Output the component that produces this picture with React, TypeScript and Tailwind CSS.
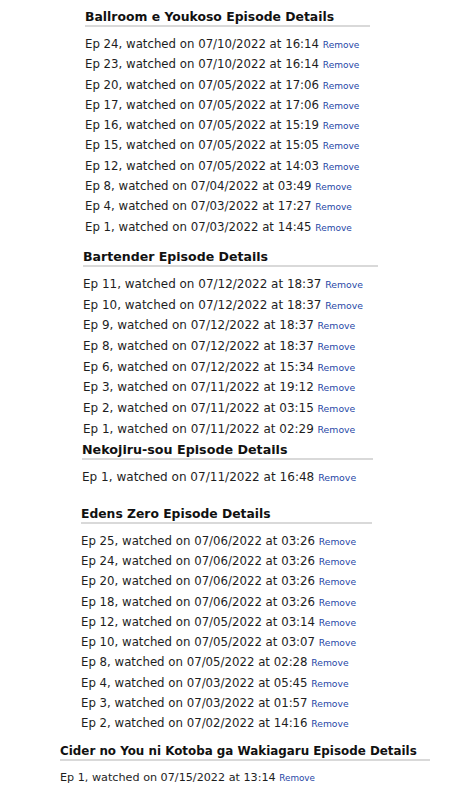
import React from 'react';

type Section = {
  title: string;
  wrap: string;
  pad: string;
  head: string;
  item: string;
  remove: string;
  entries: string[];
};

const sections: Section[] = [
  {
    title: 'Ballroom e Youkoso',
    wrap: 'mt-[9px] ml-[85px]',
    pad: 'pr-[11px]',
    head: 'text-[12.4px]',
    item: 'text-[11.75px] leading-[20.3px]',
    remove: 'text-[9px]',
    entries: [
      'Ep 24, watched on 07/10/2022 at 16:14',
      'Ep 23, watched on 07/10/2022 at 16:14',
      'Ep 20, watched on 07/05/2022 at 17:06',
      'Ep 17, watched on 07/05/2022 at 17:06',
      'Ep 16, watched on 07/05/2022 at 15:19',
      'Ep 15, watched on 07/05/2022 at 15:05',
      'Ep 12, watched on 07/05/2022 at 14:03',
      'Ep 8, watched on 07/04/2022 at 03:49',
      'Ep 4, watched on 07/03/2022 at 17:27',
      'Ep 1, watched on 07/03/2022 at 14:45',
    ],
  },
  {
    title: 'Bartender',
    wrap: 'mt-[12px] ml-[83px]',
    pad: 'pr-[15px]',
    head: 'text-[12.55px]',
    item: 'text-[11.98px] leading-[20.67px]',
    remove: 'text-[9.3px]',
    entries: [
      'Ep 11, watched on 07/12/2022 at 18:37',
      'Ep 10, watched on 07/12/2022 at 18:37',
      'Ep 9, watched on 07/12/2022 at 18:37',
      'Ep 8, watched on 07/12/2022 at 18:37',
      'Ep 6, watched on 07/12/2022 at 15:34',
      'Ep 3, watched on 07/11/2022 at 19:12',
      'Ep 2, watched on 07/11/2022 at 03:15',
      'Ep 1, watched on 07/11/2022 at 02:29',
    ],
  },
  {
    title: 'Nekojiru-sou',
    wrap: 'mt-[3px] ml-[82px]',
    pad: 'pr-[17px]',
    head: 'text-[12.7px]',
    item: 'text-[12.05px] leading-[20.4px]',
    remove: 'text-[9.4px]',
    entries: ['Ep 1, watched on 07/11/2022 at 16:48'],
  },
  {
    title: 'Edens Zero',
    wrap: 'mt-[18px] ml-[81px]',
    pad: 'pr-[16px]',
    head: 'text-[12.33px]',
    item: 'text-[11.75px] leading-[20.26px]',
    remove: 'text-[9.2px]',
    entries: [
      'Ep 25, watched on 07/06/2022 at 03:26',
      'Ep 24, watched on 07/06/2022 at 03:26',
      'Ep 20, watched on 07/06/2022 at 03:26',
      'Ep 18, watched on 07/06/2022 at 03:26',
      'Ep 12, watched on 07/05/2022 at 03:14',
      'Ep 10, watched on 07/05/2022 at 03:07',
      'Ep 8, watched on 07/05/2022 at 02:28',
      'Ep 4, watched on 07/03/2022 at 05:45',
      'Ep 3, watched on 07/03/2022 at 01:57',
      'Ep 2, watched on 07/02/2022 at 14:16',
    ],
  },
  {
    title: 'Cider no You ni Kotoba ga Wakiagaru',
    wrap: 'mt-[10px] ml-[60px]',
    pad: 'pr-[13px]',
    head: 'text-[11.9px]',
    item: 'text-[11.2px] leading-[20.4px]',
    remove: 'text-[8.8px]',
    entries: ['Ep 1, watched on 07/15/2022 at 13:14'],
  },
];

export default function App() {
  return (
    <div className="w-[469px] h-[800px] overflow-hidden bg-white font-['DejaVu_Sans',Verdana,sans-serif]">
      <div className="flex flex-col items-start">
        {sections.map((section) => (
          <div key={section.title} className={`w-fit ${section.wrap}`}>
            {/* title row with the grey rule under it */}
            <h2
              className={`font-bold leading-[16px] text-[#111] whitespace-nowrap border-b-2 border-[#d9d9d9] ${section.pad} ${section.head}`}
            >
              {section.title} Episode Details
            </h2>
            <ul className={`pt-[7px] ${section.pad}`}>
              {section.entries.map((entry) => (
                <li key={entry} className={`whitespace-nowrap text-[#1e1e1e] ${section.item}`}>
                  {entry}{' '}
                  <a href="#" className={`leading-none text-[#1f47a6] ${section.remove}`}>
                    Remove
                  </a>
                </li>
              ))}
            </ul>
          </div>
        ))}
      </div>
    </div>
  );
}
